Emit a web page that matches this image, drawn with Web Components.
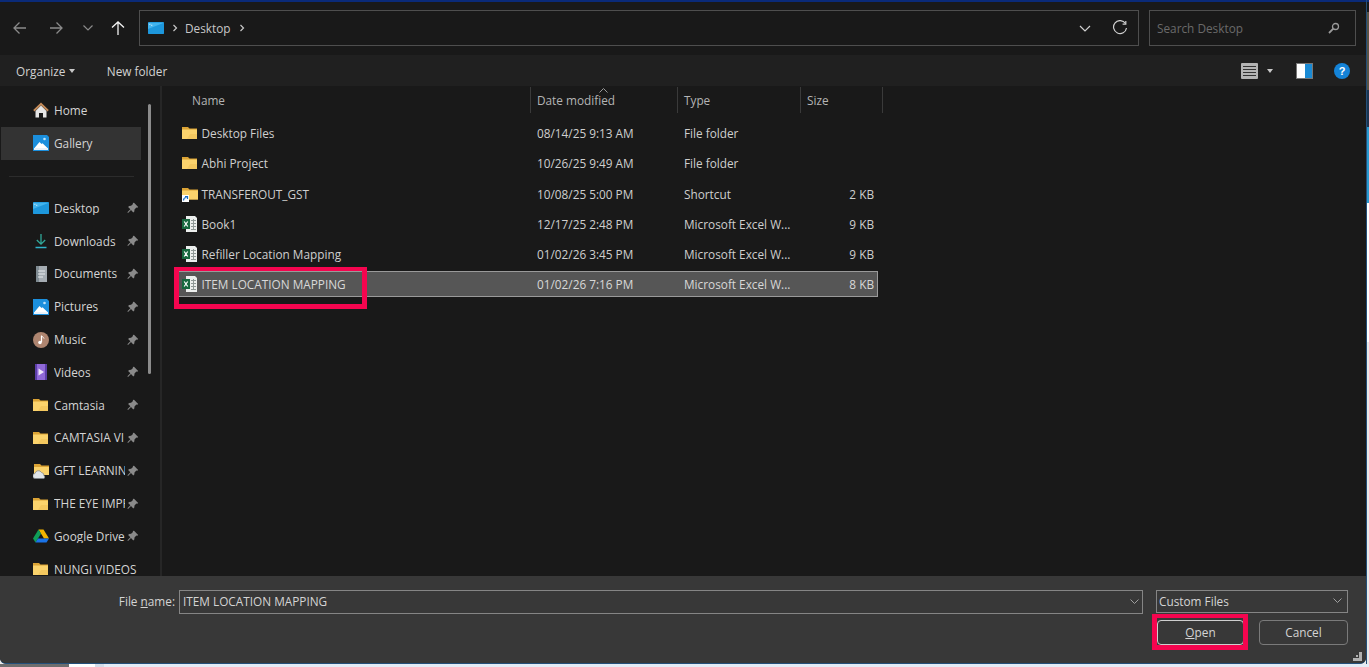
<!DOCTYPE html>
<html><head><meta charset="utf-8"><style>
html,body{margin:0;padding:0;background:#e4ecf6;overflow:hidden}
body{width:1369px;height:667px;font-family:"Open Sans","Noto Sans",sans-serif}
</style></head><body>
<desk-top><file-dialog></file-dialog></desk-top>
<script>
const I={
folder:`<svg width="16" height="16" viewBox="0 0 16 16"><path d="M0 2h6l1.500 1.500H15V14H0z" fill="#dba335"/><path d="M0 4.500h15V14H0z" fill="#fbd36c"/><path d="M8 9h7v5H5z" fill="#f4c85f"/></svg>`,
excel:`<svg width="16" height="16" viewBox="0 0 16 16"><path d="M4 0h9l2 2v14H4z" fill="#eceeed"/><path d="M9 4.500h5M9 7.500h5M9 10.500h5M9 13.500h5M11.500 3v11" stroke="#8f9896"/><rect x="0" y="3" width="8" height="10" fill="#17683f"/><path d="M2.200 5.500l3.500 5M5.700 5.500l-3.500 5" stroke="#fff" stroke-width="1.200"/></svg>`,
shortcut:`<svg width="16" height="16" viewBox="0 0 16 16"><path d="M0 2h6l1.500 1.500H16v10H0z" fill="#dba335"/><path d="M0 4.500h16v9H0z" fill="#fbd36c"/><rect x="0" y="9" width="7" height="7" fill="#fff"/><path d="M1.500 14.500c0-2 1-3 3-3M3 10.500h2.500V13" stroke="#1c6fc2" fill="none" stroke-width="1.200"/></svg>`,
home:`<svg width="16" height="16" viewBox="0 0 16 16"><path d="M8 .5L.2 8 1.500 9.500 8 3.200l6.500 6.300L15.800 8z" fill="#c48a58"/><path d="M2.500 9L8 3.500 13.500 9v6.500h-3.500V11H6v4.500H2.500z" fill="#e6e6e6"/></svg>`,
gallery:`<svg width="16" height="16" viewBox="0 0 16 16"><path d="M0 0h14l2 2v14H0z" fill="#1b8fdd"/><path d="M1.500 13l5-6 2 2 1-.8 5 4.800z" fill="#fff"/><rect x="1" y="13" width="14" height="2" fill="#e8f2fa"/><circle cx="11.500" cy="4" r="1.300" fill="#bfe3fa"/></svg>`,
desktop:`<svg width="17" height="16" viewBox="0 0 17 16"><rect width="17" height="13" y="1.500" rx="1" fill="#1d97dc"/><path d="M0 2.500h17L0 9z" fill="#42b4ee"/><path d="M1.500 3.500h1v1h-1zM3.500 4.500h1v1h-1z" fill="#fff"/></svg>`,
downloads:`<svg width="16" height="16" viewBox="0 0 16 16" fill="none"><path d="M8 1v10M3.800 7L8 11.200 12.200 7" stroke="#31a899" stroke-width="1.300"/><path d="M2.500 14.500h11" stroke="#2fb3c9" stroke-width="1.500"/></svg>`,
documents:`<svg width="16" height="16" viewBox="0 0 16 16"><path d="M3 0h11v16H3z" fill="#a5acb2"/><path d="M3 0h3v16H3z" fill="#7f8b92"/><path d="M5 5h7M5 8h7M5 11h5" stroke="#e8ecee"/></svg>`,
music:`<svg width="16" height="16" viewBox="0 0 16 16"><circle cx="8" cy="8" r="8" fill="#ae8570"/><path d="M8.500 4v6" stroke="#fff" stroke-width="1.200"/><path d="M8.500 3.500c.5 1.500 2 1.500 2.500 3" stroke="#fff" fill="none"/><circle cx="7" cy="10.500" r="1.800" fill="#fff"/></svg>`,
videos:`<svg width="16" height="16" viewBox="0 0 16 16"><rect x="2" y="0" width="12" height="16" fill="#9069d8"/><path d="M2 0h2v16H2zM12 0h2v16h-2z" fill="#5c3fa8"/><path d="M5.500 4.500l5.500 3.500-5.500 3.500z" fill="#efe8fb"/></svg>`,
cloud:`<svg width="16" height="16" viewBox="0 0 16 16"><path d="M1 1h6l1.500 1.500H16V12H1z" fill="#dba335"/><path d="M1 4h15v8H1z" fill="#fbd36c"/><path d="M2.500 15.500a2.500 2.500 0 0 1-.5-5 3.500 3.500 0 0 1 6.500-1 3 3 0 0 1 2.500 3 2 2 0 0 1 0 3z" fill="#dfe4e8" stroke="#7c8286" stroke-width=".7"/></svg>`,
drive:`<svg width="16" height="16" viewBox="0 0 16 16"><path d="M5.500 1.500h5L16 10.500h-5z" fill="#f4b400"/><path d="M5.500 1.500L0 10.500l2.500 4L8 5.700z" fill="#0f9d58"/><path d="M2.500 14.500h11L16 10.500H5z" fill="#1a73e8"/></svg>`,
pin:`<svg width="12" height="12" viewBox="0 0 12 12"><path d="M7 .8l4.200 4.200-1 .8-.8-.3-1.900 1.900-.2 2-1 1L4 7.900l-3 3-.6-.6 3-3L1.100 5l1-1 2-.2L6 1.900l-.2-.8z" fill="#8a8a8a"/></svg>`
};
class DlgIcon extends HTMLElement{
static get observedAttributes(){return['name']}
constructor(){super();this.attachShadow({mode:'open'})}
attributeChangedCallback(){this.render()}
connectedCallback(){this.render()}
render(){const n=this.getAttribute('name');this.shadowRoot.innerHTML=`<style>:host{display:inline-flex;width:16px;height:16px;flex:none}</style>${I[n]||''}`}}
customElements.define('dlg-icon',DlgIcon);

class DeskTop extends HTMLElement{constructor(){super();this.attachShadow({mode:'open'}).innerHTML=`<style>
:host{display:grid;grid-template-columns:1366px 3px;grid-template-rows:664px 3px;width:1369px;height:667px;overflow:hidden;background:#e9e9e9}
.right{display:flex;flex-direction:column;border-left:1px solid #24507a;box-sizing:border-box}
.right i{display:block}
.bottom{grid-column:1/3;display:flex}
.bottom i{display:block;height:3px}
</style><slot></slot>
<div class="right"><i style="height:2px;background:#0a2a78"></i><i style="height:10px;background:#191919"></i><i style="height:78px;background:#5a5446"></i><i style="height:37px;background:#1c3450"></i><i style="height:76px;background:#2a9bd0"></i><i style="height:139px;background:#fff"></i><i style="flex:1;background:#e9e9e9"></i></div>
<div class="bottom"><i style="width:69px;background:#6e6e6e"></i><i style="width:26px;background:#fff"></i><i style="width:9px;background:#d4dce8"></i><i style="flex:1;background:#e4ecf6"></i></div>`}}
customElements.define('desk-top',DeskTop);

class NavBar extends HTMLElement{constructor(){super();this.attachShadow({mode:'open'}).innerHTML=`<style>
:host{display:flex;height:53px;background:#191919;align-items:center;box-sizing:border-box;padding:0 0 1px 10px}
button{all:unset;display:flex;align-items:center;justify-content:center}
.b{width:20px;height:20px;margin-right:16px}
.addr{margin-left:13px;width:1000px;height:36px;box-sizing:border-box;border:1px solid #4e4e4e;display:flex;align-items:center;padding-left:8px;color:#c8c8c8;font-size:11.800px}
.addr span{white-space:nowrap}
.grow{flex:1}
.search{margin-left:10px;width:207px;height:36px;box-sizing:border-box;border:1px solid #4e4e4e;display:flex;align-items:center;padding:0 15px 0 7px;color:#6a6a6a;font-size:11.800px;justify-content:space-between}
</style>
<button class="b"><svg width="16" height="16" viewBox="0 0 16 16" fill="none" stroke="#8a8a8a" stroke-width="1.300"><path d="M14 8H2M7.500 2.500L2 8l5.500 5.500"/></svg></button>
<button class="b"><svg width="16" height="16" viewBox="0 0 16 16" fill="none" stroke="#8a8a8a" stroke-width="1.300"><path d="M2 8h12M8.500 2.500L14 8l-5.500 5.500"/></svg></button>
<button style="width:12px;margin-right:16px"><svg width="10" height="6" viewBox="0 0 10 6" fill="none" stroke="#8a8a8a" stroke-width="1.200"><path d="M.5.500L5 5 9.500.5"/></svg></button>
<button style="width:16px"><svg width="16" height="16" viewBox="0 0 16 16" fill="none" stroke="#f2f2f2" stroke-width="1.300"><path d="M8 15V2M2 7.500L8 2l6 5.500"/></svg></button>
<div class="addr"><dlg-icon name="desktop"></dlg-icon>
<svg style="margin-left:8px" width="6" height="8" viewBox="0 0 6 8" fill="none" stroke="#c8c8c8" stroke-width="1.200"><path d="M1.500 1l3 3-3 3"/></svg>
<span style="margin-left:7px">Desktop</span>
<svg style="margin-left:8px" width="6" height="8" viewBox="0 0 6 8" fill="none" stroke="#c8c8c8" stroke-width="1.200"><path d="M1.500 1l3 3-3 3"/></svg>
<div class="grow"></div>
<svg width="12" height="7" viewBox="0 0 12 7" fill="none" stroke="#d0d0d0" stroke-width="1.200"><path d="M1 1l5 5 5-5"/></svg>
<svg style="margin:0 10px 0 21px" width="16" height="16" viewBox="0 0 16 16" fill="none" stroke="#d0d0d0" stroke-width="1.200"><path d="M13.500 3.500A6.500 6.500 0 1 0 14.500 8"/><path d="M13.800 1v3.200h-3.200"/></svg>
</div>
<div class="search"><span>Search Desktop</span>
<svg width="12" height="12" viewBox="0 0 12 12" fill="none" stroke="#9a9a9a" stroke-width="1.300"><circle cx="7.500" cy="4.500" r="3"/><path d="M5.300 6.700L1 11" stroke-width="1.800"/></svg></div>`}}
customElements.define('nav-bar',NavBar);

class ToolBar extends HTMLElement{constructor(){super();this.attachShadow({mode:'open'}).innerHTML=`<style>
:host{display:flex;height:31px;background:#202020;align-items:center;padding:1px 0 0 16px;color:#d2d2d2;font-size:11.800px;box-sizing:border-box}
.car{margin-left:4px;width:0;height:0;border-left:3.500px solid transparent;border-right:3.500px solid transparent;border-top:4px solid #c8c8c8}
.new{margin-left:31.500px}
.grow{flex:1}
.r{display:flex;align-items:center;padding-right:16px}
</style>
<span>Organize</span><span class="car"></span><span class="new">New folder</span><span class="grow"></span>
<div class="r">
<svg width="17" height="16" viewBox="0 0 17 16"><rect width="17" height="16" rx="1" fill="#b4b4b4"/><path d="M2 3.500h13M2 6.500h13M2 9.500h13M2 12.500h13" stroke="#333" stroke-width="1"/></svg>
<span class="car" style="margin-left:9px"></span>
<svg style="margin-left:23px" width="17" height="16" viewBox="0 0 17 16"><rect x=".5" y=".5" width="16" height="15" fill="#fff" stroke="#777"/><rect x="9" y="1" width="7" height="14" fill="#1a8ad4"/></svg>
<svg style="margin-left:21px" width="16" height="16" viewBox="0 0 16 16"><circle cx="8" cy="8" r="8" fill="#1483d8"/><text x="8" y="12" text-anchor="middle" font-family="Liberation Sans" font-weight="700" font-size="11" fill="#fff">?</text></svg>
</div>`}}
customElements.define('tool-bar',ToolBar);

class SideItem extends HTMLElement{
static get observedAttributes(){return['icon','pin']}
constructor(){super();this.attachShadow({mode:'open'}).innerHTML=`<style>
:host{display:flex;height:32.800px;align-items:center;box-sizing:border-box;padding-left:32px;color:#d4d4d4;font-size:11.800px;line-height:13px;width:140px}
:host([sel]){background:#333}
.t{margin-left:5px;width:71px;overflow:hidden;white-space:nowrap}
:host(:not([pin])) .t{width:auto;overflow:visible}
.pin{margin-left:2px;display:flex}
</style><dlg-icon></dlg-icon><span class="t"><slot></slot></span><span class="pin"></span>`}
attributeChangedCallback(){this.sync()}
connectedCallback(){this.sync()}
sync(){const s=this.shadowRoot;s.querySelector('dlg-icon').setAttribute('name',this.getAttribute('icon')||'');s.querySelector('.pin').innerHTML=this.hasAttribute('pin')?I.pin:''}}
customElements.define('side-item',SideItem);

class SideBar extends HTMLElement{constructor(){super();this.attachShadow({mode:'open'}).innerHTML=`<style>
:host{display:block;flex:none;position:relative;overflow:hidden;border-right:2px solid #262626;box-sizing:border-box;width:162px;background:#191919;padding:8px 0 0 1px}
.sep{height:1px;background:#2c2c2c;margin:16px 0 15.400px 8px;width:125px}
.bar{position:absolute;left:148px;top:18px;width:3px;height:270px;background:#8c8c8c;border-radius:2px}
</style><slot name="top"></slot><div class="sep"></div><slot></slot><div class="bar"></div>`}}
customElements.define('side-bar',SideBar);

class ColHead extends HTMLElement{constructor(){super();this.attachShadow({mode:'open'}).innerHTML=`<style>
:host{display:flex;height:30px;color:#b4b4b4;font-size:11.800px;position:relative}
.c{box-sizing:border-box;border-right:1px solid #3a3a3a;display:flex;align-items:center;padding:0 0 0 6px;height:26px;margin-top:1px}
.s{position:absolute;left:437px;top:2px}
</style>
<div class="c" style="width:369px;padding-left:30px">Name</div><div class="c" style="width:147px">Date modified</div><div class="c" style="width:123px">Type</div><div class="c" style="width:82px">Size</div>
<svg class="s" width="9" height="5" viewBox="0 0 9 5" fill="none" stroke="#9a9a9a"><path d="M.5 4.500l4-4 4 4"/></svg>`}}
customElements.define('col-head',ColHead);

class FileRow extends HTMLElement{
static get observedAttributes(){return['icon','date','type','size']}
constructor(){super();this.attachShadow({mode:'open'}).innerHTML=`<style>
:host{display:flex;height:30.400px;align-items:center;color:#cfcfcf;font-size:11.800px;width:716px;box-sizing:border-box}
:host([sel]){background:#565656;border:solid #9a9a9a;border-width:1px 1px 1px 0;height:26px;margin:1.300px 0 0 16px;width:700px;color:#d8d8d8}
:host([sel]) .n{width:353px;padding-left:4px}
.n{width:369px;display:flex;align-items:center;box-sizing:border-box;padding-left:20px;gap:3.500px;white-space:nowrap}
.d{width:147px;padding-left:6px;box-sizing:border-box}
.t{width:123px;padding-left:6px;box-sizing:border-box}
.s{width:73px;text-align:right;box-sizing:border-box}
</style><div class="n"><dlg-icon></dlg-icon><span><slot></slot></span></div><div class="d"></div><div class="t"></div><div class="s"></div>`}
attributeChangedCallback(){this.sync()}
connectedCallback(){this.sync()}
sync(){const s=this.shadowRoot;s.querySelector('dlg-icon').setAttribute('name',this.getAttribute('icon')||'');s.querySelector('.d').textContent=this.getAttribute('date')||'';s.querySelector('.t').textContent=this.getAttribute('type')||'';s.querySelector('.s').textContent=this.getAttribute('size')||''}}
customElements.define('file-row',FileRow);

class FileDialog extends HTMLElement{constructor(){super();this.attachShadow({mode:'open'}).innerHTML=`<style>
:host{display:flex;flex-direction:column;width:1366px;height:664px;position:relative;overflow:hidden;background:#191919;box-sizing:border-box;border-bottom:1px solid #24507a;border-bottom-left-radius:6px;border-bottom-right-radius:6px}
.top{height:2px;background:#0a2a78;flex:none}
.main{height:490px;display:flex;background:#191919;flex:none}
.list{flex:1;box-sizing:border-box}
.rows{padding-top:1.700px}
.foot{flex:1;background:#383838;position:relative;display:grid;grid-template-columns:179px 965px 192px;grid-template-rows:24px 25px;padding:14px 0 0 0;row-gap:6px;box-sizing:border-box;color:#d4d4d4;font-size:11.800px}
.lab{text-align:right;padding-right:4px;line-height:22px;box-sizing:border-box}
.inp{border:1px solid #858585;box-sizing:border-box;height:24px;display:flex;align-items:center;padding:0 3px 2px 3px;width:964px;justify-content:space-between;white-space:nowrap}
.sel{border:1px solid #858585;box-sizing:border-box;height:23px;width:192px;margin-left:12px;display:flex;align-items:center;justify-content:space-between;padding:0 5px 2px 2px}
.btns{grid-column:3;display:flex;width:192px;margin-left:12px;gap:15px;padding-left:1px;box-sizing:border-box}
.btn{box-sizing:border-box;width:89px;height:25px;border:1px solid #7a7a7a;border-radius:4px;display:flex;align-items:center;justify-content:center;padding-bottom:2px}
.btn.def{border:1px solid #cfcfcf;width:87px}
.mark{position:absolute;border:solid #f5054f;border-width:4px 5px 5px 5px;box-sizing:border-box;pointer-events:none}
.grip{position:absolute;right:4px;bottom:2px}
</style>
<div class="top"></div>
<nav-bar></nav-bar>
<tool-bar></tool-bar>
<div class="main">
<side-bar>
<div slot="top">
<side-item icon="home">Home</side-item>
<side-item icon="gallery" sel>Gallery</side-item>
</div>
<side-item icon="desktop" pin>Desktop</side-item>
<side-item icon="downloads" pin>Downloads</side-item>
<side-item icon="documents" pin>Documents</side-item>
<side-item icon="gallery" pin>Pictures</side-item>
<side-item icon="music" pin>Music</side-item>
<side-item icon="videos" pin>Videos</side-item>
<side-item icon="folder" pin>Camtasia</side-item>
<side-item icon="folder" pin>CAMTASIA VI</side-item>
<side-item icon="cloud" pin>GFT LEARNIN</side-item>
<side-item icon="folder" pin>THE EYE IMPR</side-item>
<side-item icon="drive" pin>Google Drive</side-item>
<side-item icon="folder">NUNGI VIDEOS</side-item>
</side-bar>
<div class="list"><col-head></col-head><div class="rows">
<file-row icon="folder" date="08/14/25 9:13 AM" type="File folder">Desktop Files</file-row>
<file-row icon="folder" date="10/26/25 9:49 AM" type="File folder">Abhi Project</file-row>
<file-row icon="shortcut" date="10/08/25 5:00 PM" type="Shortcut" size="2 KB">TRANSFEROUT_GST</file-row>
<file-row icon="excel" date="12/17/25 2:48 PM" type="Microsoft Excel W..." size="9 KB">Book1</file-row>
<file-row icon="excel" date="01/02/26 3:45 PM" type="Microsoft Excel W..." size="9 KB">Refiller Location Mapping</file-row>
<file-row icon="excel" sel date="01/02/26 7:16 PM" type="Microsoft Excel W..." size="8 KB">ITEM LOCATION MAPPING</file-row>
</div></div>
</div>
<div class="foot">
<div class="lab">File <u>n</u>ame:</div>
<div class="inp"><span>ITEM LOCATION MAPPING</span><svg width="9" height="5" viewBox="0 0 9 5" fill="none" stroke="#a0a0a0"><path d="M.5.500l4 4 4-4"/></svg></div>
<div class="sel"><span>Custom Files</span><svg width="9" height="5" viewBox="0 0 9 5" fill="none" stroke="#a0a0a0"><path d="M.5.500l4 4 4-4"/></svg></div>
<div class="btns"><div class="btn def"><span><u>O</u>pen</span></div><div class="btn">Cancel</div></div>
<svg class="grip" width="9" height="9" viewBox="0 0 9 9" fill="#b0b0b0"><path d="M6 0h3v3H6zM3 3h2v2H3zM6 3h3v3H6zM0 6h3v3H0zM3 6h3v3H3zM6 6h3v3H6z"/></svg>
</div>
<div class="mark" style="left:174px;top:267px;width:193px;height:42px"></div>
<div class="mark" style="left:1152px;top:614px;width:96px;height:36px"></div>
</div>`}}
customElements.define('file-dialog',FileDialog);
</script></body></html>
